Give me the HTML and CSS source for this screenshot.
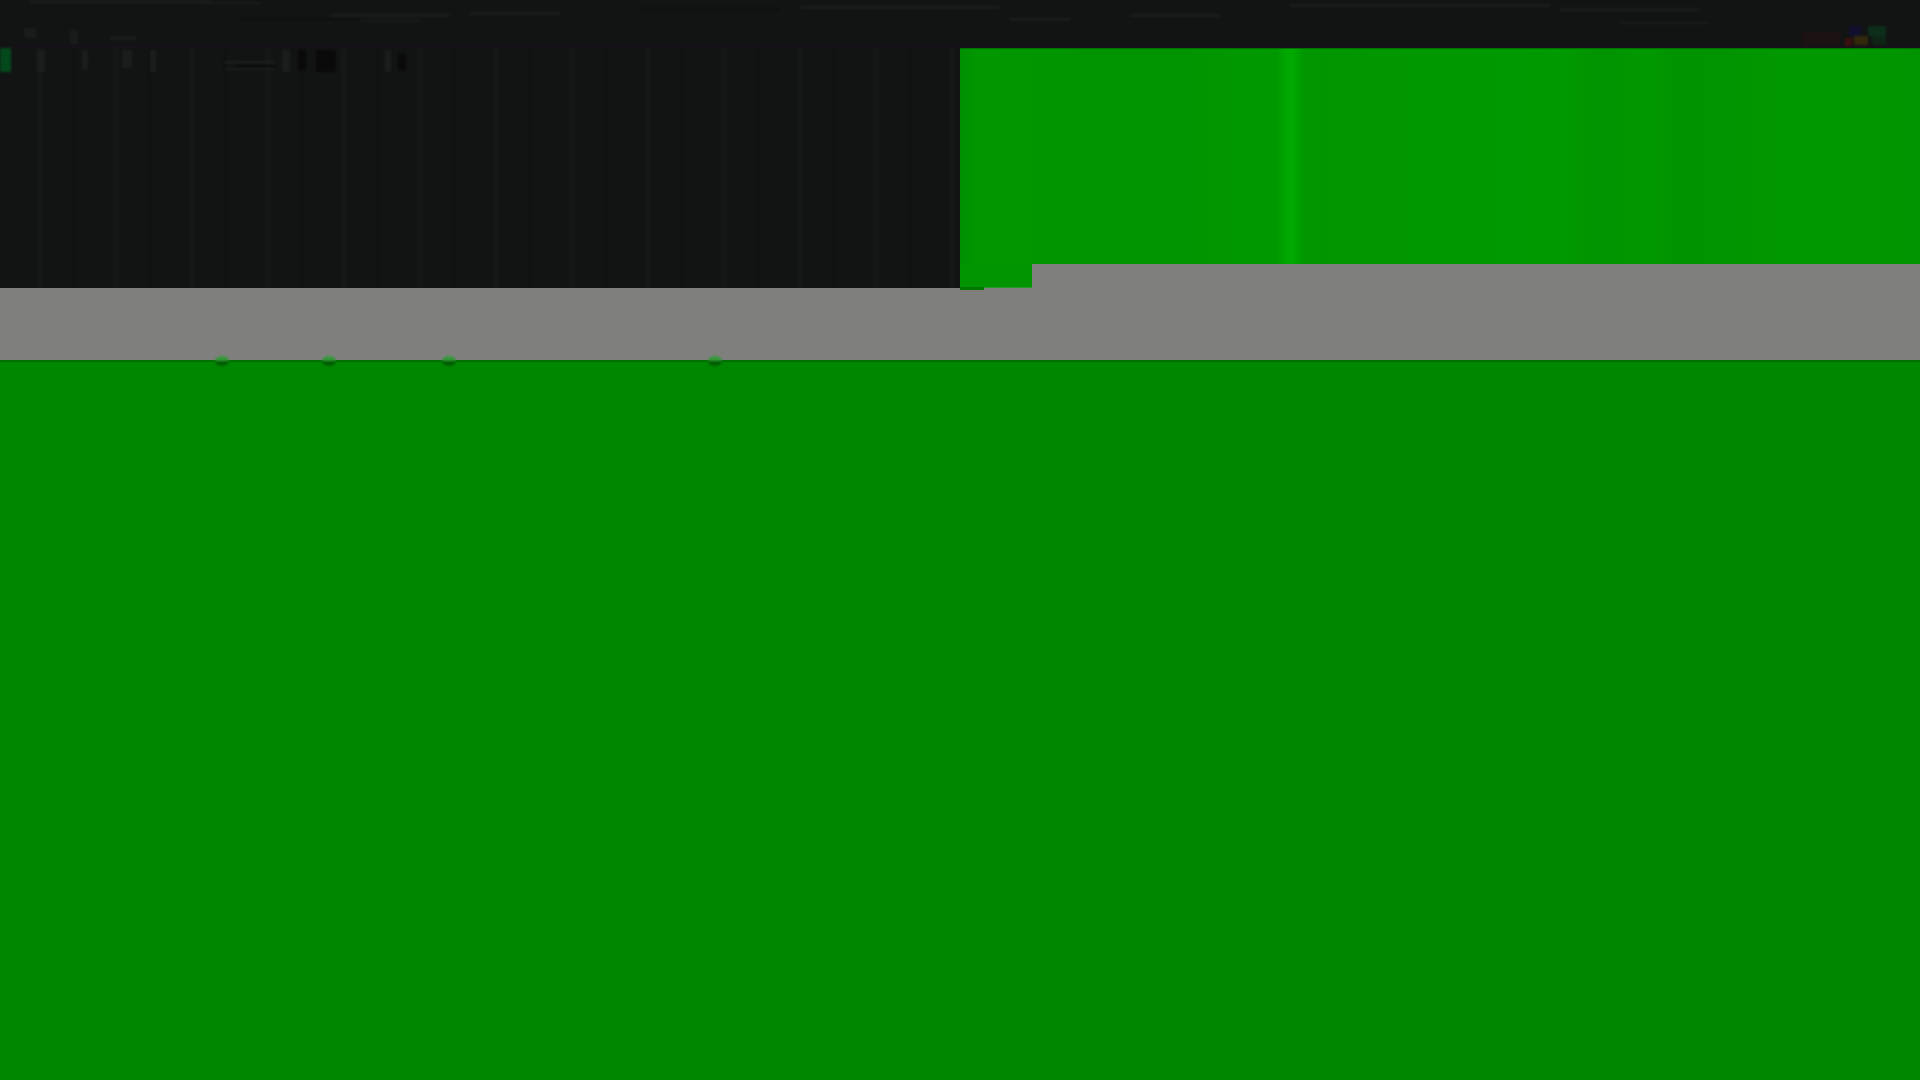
FILE: index.html
```html
<!DOCTYPE html>
<html lang="en">
<head>
    <meta charset="UTF-8">
    <meta name="viewport" content="width=device-width, initial-scale=1.0">
    <title>Frame</title>
    <link rel="stylesheet" href="styles.css">
</head>
<body>
    <div class="upper">
        <div class="top-bar">
            <svg class="top-marks" width="1920" height="46" viewBox="0 0 1920 46">
                <g fill="#1a1c1b">
                    <rect x="30" y="0" width="180" height="3"/>
                    <rect x="200" y="2" width="60" height="2"/>
                    <rect x="330" y="14" width="120" height="3"/>
                    <rect x="360" y="20" width="60" height="2"/>
                    <rect x="470" y="12" width="90" height="3"/>
                    <rect x="24" y="28" width="12" height="10"/>
                    <rect x="70" y="30" width="8" height="14"/>
                    <rect x="110" y="36" width="26" height="4"/>
                    <rect x="800" y="6" width="200" height="3"/>
                    <rect x="1010" y="18" width="60" height="3"/>
                    <rect x="1130" y="14" width="90" height="3"/>
                    <rect x="1290" y="4" width="260" height="3"/>
                    <rect x="1560" y="8" width="140" height="3"/>
                    <rect x="1620" y="22" width="90" height="2"/>
                </g>
                <g fill="#0d0e0d">
                    <rect x="240" y="18" width="120" height="2"/>
                    <rect x="640" y="8" width="140" height="2"/>
                </g>
                <!-- colour noise at the right end -->
                <rect x="1802" y="32" width="38" height="14" fill="#1c1214"/>
                <rect x="1849" y="26" width="12" height="10" fill="#10102e"/>
                <rect x="1845" y="38" width="7" height="8" fill="#3c1010"/>
                <rect x="1854" y="36" width="14" height="9" fill="#32290c"/>
                <rect x="1868" y="26" width="18" height="10" fill="#0d2e1a"/>
                <rect x="1872" y="36" width="14" height="9" fill="#0f2616"/>
            </svg>
            <div class="top-edge"></div>
        </div>
        <div class="panes">
            <div class="left-pane">
                <span class="edge-mark"></span>
                <svg class="left-marks" width="960" height="26" viewBox="0 0 960 26">
                    <g fill="#1b1d1c">
                        <rect x="37" y="2" width="8" height="22"/>
                        <rect x="82" y="2" width="6" height="20"/>
                        <rect x="122" y="2" width="10" height="18"/>
                        <rect x="150" y="2" width="6" height="22"/>
                        <rect x="225" y="13" width="50" height="3"/>
                        <rect x="225" y="20" width="50" height="2"/>
                        <rect x="282" y="2" width="8" height="22"/>
                        <rect x="385" y="2" width="6" height="22"/>
                    </g>
                    <g fill="#090a09">
                        <rect x="236" y="17" width="40" height="2"/>
                        <rect x="298" y="2" width="8" height="20"/>
                        <rect x="316" y="2" width="20" height="22"/>
                        <rect x="398" y="6" width="8" height="16"/>
                    </g>
                </svg>
            </div>
            <div class="right-pane">
                <div class="green-band"></div>
                <div class="green-tab"></div>
            </div>
        </div>
        <span class="tab-sliver"></span>
    </div>
    <div class="lower">
        <span class="seam-dot dot-one"></span>
        <span class="seam-dot dot-two"></span>
        <span class="seam-dot dot-three"></span>
        <span class="seam-dot dot-four"></span>
    </div>
</body>
</html>
```

FILE: styles.css
```css
body {
    margin: 0;
    background-color: #008700;
}
.upper {
    position: relative;
    height: 360px;
    background-color: #7f807d;
}
.top-bar {
    height: 48px;
    background-color: #121413;
}
.top-marks {
    display: block;
    filter: blur(1px);
}
.top-edge {
    height: 2px;
    background-color: #171119;
}
.panes {
    display: flex;
}
.left-pane {
    position: relative;
    width: 960px;
    height: 240px;
    background-color: #121413;
    background-image: repeating-linear-gradient(90deg, transparent 0, transparent 37px, #151716 37px, #151716 43px, transparent 43px, transparent 71px, #101211 71px, #101211 76px);
}
.edge-mark {
    position: absolute;
    top: 0;
    left: 0;
    width: 11px;
    height: 24px;
    background-color: #04481c;
    filter: blur(1px);
}
.left-marks {
    display: block;
    filter: blur(1px);
}
.right-pane {
    width: 960px;
}
.green-band {
    position: relative;
    height: 215px;
    border-top: 1px solid #007000;
    background-color: #009600;
    background-image: linear-gradient(90deg, #008f00 0, #009700 16px, #009400 200px, #009800 300px, #009600 360px, #009900 600px, #009400 640px, #009800 690px, #009300 720px, #009800 840px, #009500 960px);
}
.green-band::after {
    content: "";
    position: absolute;
    top: 0;
    bottom: 0;
    left: 316px;
    width: 28px;
    background-image: linear-gradient(90deg, transparent, #00a800 40%, #00a800 60%, transparent);
}
.green-tab {
    width: 72px;
    height: 24px;
    background-color: #009400;
    box-shadow: inset 0 -1px 0 #2b9a2b;
}
.tab-sliver {
    position: absolute;
    top: 287px;
    left: 960px;
    width: 24px;
    height: 3px;
    background-color: #007800;
}
.lower {
    position: relative;
    height: 720px;
    box-shadow: inset 0 2px 0 #007000;
}
.seam-dot {
    position: absolute;
    top: -4px;
    width: 14px;
    height: 10px;
    border-radius: 50%;
    background-image: linear-gradient(#35993a 45%, #005c00 55%);
    filter: blur(1px);
}
.dot-one {
    left: 215px;
}
.dot-two {
    left: 322px;
}
.dot-three {
    left: 442px;
}
.dot-four {
    left: 708px;
}
```
